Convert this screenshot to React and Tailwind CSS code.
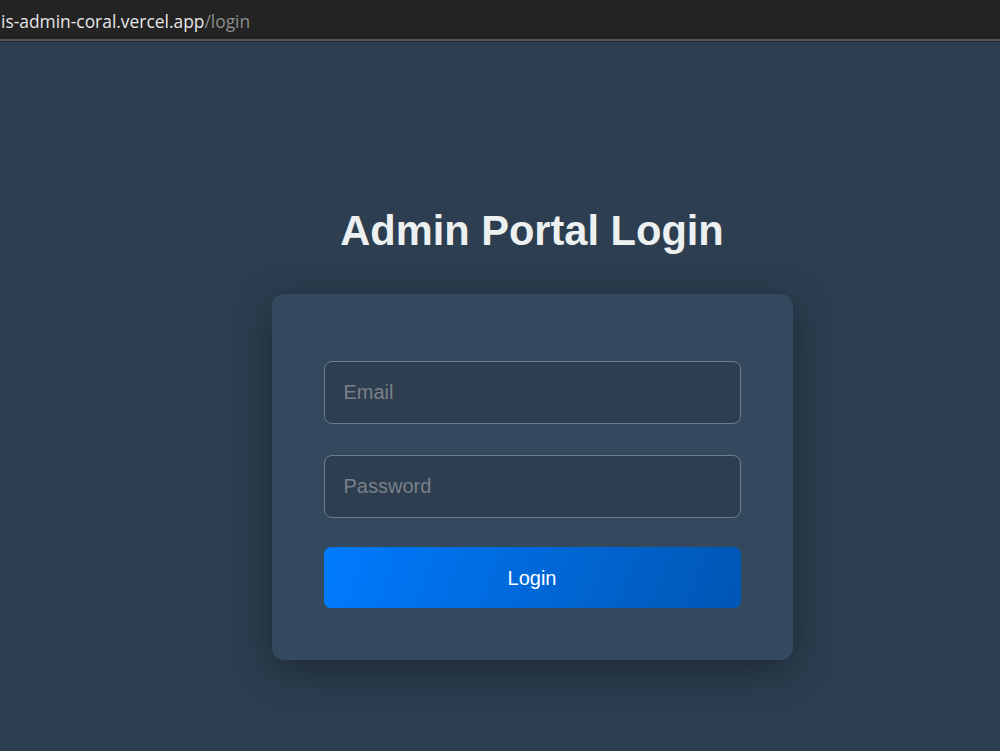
export default function App() {
  return (
    <div className="min-h-[751px] w-full flex flex-col bg-[#2c3e50]">
      <div className="h-[39px] bg-[#232323] flex items-center pl-[1px] pt-[3px]">
        <span className="text-[17.4px] text-[#e6e6e6]" style={{ fontFamily: '"Open Sans", "Noto Sans", sans-serif' }}>
          is-admin-coral.vercel.app<span className="text-[#8c8c8c]">/login</span>
        </span>
      </div>
      <div className="h-[2px] bg-[#565656]" />
      <div className="h-[1px] bg-[#2a2a2a]" />
      <div className="flex-1 flex flex-col items-center pl-[64px] pt-[165px]" style={{ fontFamily: '"Liberation Sans", Arial, sans-serif' }}>
        <h1 className="text-[41.6px] leading-[48px] font-bold text-[#ecf0f1]">Admin Portal Login</h1>
        <div className="mt-[39px] w-[521px] rounded-[12px] bg-[#34495e] pt-[67px] pb-[52px] px-[52px] shadow-[0_10px_40px_rgba(0,0,0,0.35)]">
          <div className="flex flex-col">
            <input
              type="email"
              placeholder="Email"
              className="h-[63px] w-full rounded-[8px] border border-[#6f7d8c] bg-[#2c3e50] px-[19px] text-[20px] text-[#ecf0f1] placeholder:text-[#7b8088] outline-none"
            />
            <input
              type="password"
              placeholder="Password"
              className="mt-[31px] h-[63px] w-full rounded-[8px] border border-[#6f7d8c] bg-[#2c3e50] px-[19px] text-[20px] text-[#ecf0f1] placeholder:text-[#7b8088] outline-none"
            />
            <button className="mt-[29px] h-[61px] w-full rounded-[7px] bg-[linear-gradient(110deg,#007bff,#0056b3)] text-[20px] text-white">
              Login
            </button>
          </div>
        </div>
      </div>
    </div>
  );
}
